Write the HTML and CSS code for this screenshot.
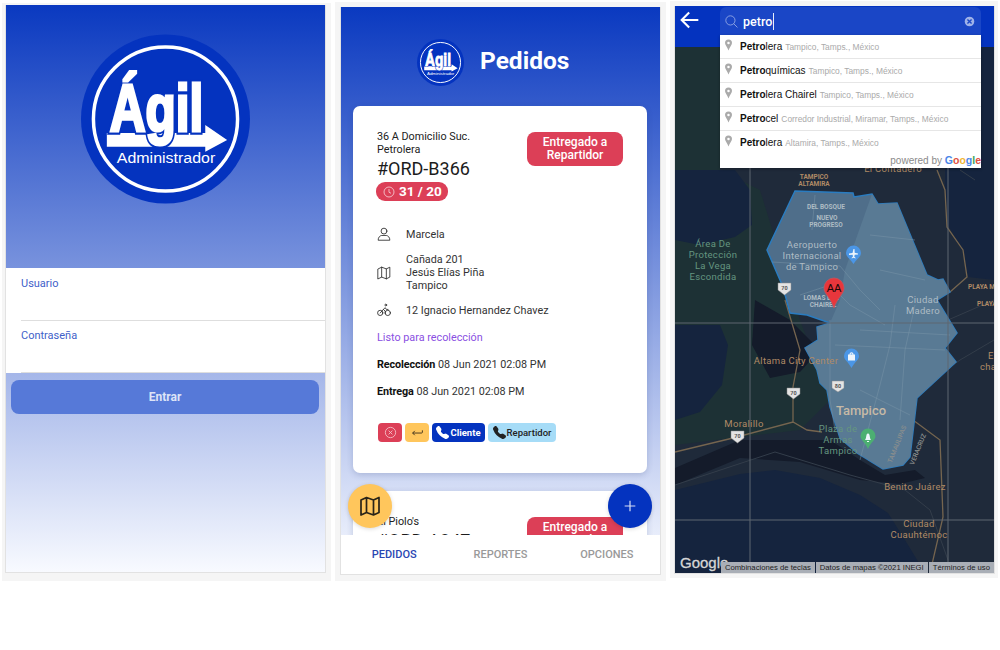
FILE: index.html
```html
<!DOCTYPE html>
<html lang="es">
<head>
    <meta charset="UTF-8">
    <meta name="viewport" content="width=device-width, initial-scale=1.0">
    <title>Ágil Administrador</title>
    <link rel="stylesheet" href="styles.css">
</head>
<body>
    <svg class="defs" width="0" height="0" aria-hidden="true">
        <symbol id="logo" viewBox="0 0 170 170">
            <circle cx="85" cy="85" r="85" fill="#0433bf"/>
            <circle cx="85" cy="85" r="72.5" fill="none" stroke="#fff" stroke-width="3.5"/>
            <path d="M26 99H125V91L147 106 125 118V113H26Z" fill="#fff"/>
            <text class="logo-word logo-word-edge" x="29" y="97" textLength="94" lengthAdjust="spacingAndGlyphs">Ágil</text>
            <text class="logo-word" x="29" y="97" textLength="94" lengthAdjust="spacingAndGlyphs">Ágil</text>
            <text class="logo-sub" x="36" y="129" textLength="99" lengthAdjust="spacingAndGlyphs">Administrador</text>
        </symbol>
    </svg>

    <div class="screens">
        <!-- login -->
        <div class="frame frame-login">
            <div class="phone phone-gradient">
                <div class="login-top">
                    <svg class="logo-big"><use href="#logo"/></svg>
                </div>
                <div class="login-form">
                    <div class="field">
                        <label for="usuario">Usuario</label>
                        <input type="text" id="usuario">
                    </div>
                    <div class="field">
                        <label for="password">Contraseña</label>
                        <input type="password" id="password">
                    </div>
                </div>
                <div class="login-action">
                    <button class="enter-button">Entrar</button>
                </div>
            </div>
        </div>

        <!-- pedidos -->
        <div class="frame frame-orders">
            <div class="phone phone-gradient">
                <div class="orders-scroll">
                    <div class="orders-head">
                        <svg class="logo-small"><use href="#logo"/></svg>
                        <h1>Pedidos</h1>
                    </div>
                    <div class="order-card">
                        <div class="order-top">
                            <div class="order-id">
                                <div class="branch">36 A Domicilio Suc. Petrolera</div>
                                <div class="order-number">#ORD-B366</div>
                                <div class="time-badge">
                                    <svg viewBox="0 0 24 24" class="clock-icon"><circle cx="12" cy="12" r="10"/><path d="M12 6v6.5l4 2"/></svg>
                                    31 / 20
                                </div>
                            </div>
                            <div class="status-button">Entregado a Repartidor</div>
                        </div>
                        <div class="info-row info-first">
                            <svg viewBox="0 0 24 24" class="line-icon"><circle cx="12" cy="7" r="5"/><path d="M2 22c0-4.500 3-7 6-7.500h8c3 .5 6 3 6 7.500z"/></svg>
                            <span>Marcela</span>
                        </div>
                        <div class="info-row">
                            <svg viewBox="0 0 24 24" class="line-icon"><path d="M2 5l6-3 8 3 6-3v17l-6 3-8-3-6 3zM8 2v17M16 5v17"/></svg>
                            <span>Cañada 201<br>Jesús Elías Piña<br>Tampico</span>
                        </div>
                        <div class="info-row info-last">
                            <svg viewBox="0 0 24 24" class="line-icon"><circle cx="5.500" cy="17" r="4.500"/><circle cx="18.500" cy="17" r="4.500"/><circle cx="15" cy="3.500" r="1.500"/><path d="M5.500 17l5.500-6 3-3 2 3h3M11 11l3 3v4"/></svg>
                            <span>12 Ignacio Hernandez Chavez</span>
                        </div>
                        <div class="ready-text">Listo para recolección</div>
                        <div class="date-text"><b>Recolección</b> 08 Jun 2021 02:08 PM</div>
                        <div class="date-text"><b>Entrega</b> 08 Jun 2021 02:08 PM</div>
                        <div class="order-actions">
                            <div class="mini-button mini-red">
                                <svg viewBox="0 0 24 24" class="mini-icon"><circle cx="12" cy="12" r="9.500"/><path d="M8.500 8.500l7 7M15.500 8.500l-7 7"/></svg>
                            </div>
                            <div class="mini-button mini-yellow">
                                <svg viewBox="0 0 24 24" class="mini-icon"><path d="M21 8v3.500a1.500 1.500 0 0 1-1.500 1.500H3M7 9l-4 4 4 4"/></svg>
                            </div>
                            <div class="mini-button mini-blue">
                                <svg viewBox="0 0 16 16" class="phone-icon"><path d="M1.885.511a1.745 1.745 0 0 1 2.61.163L6.29 2.98c.329.423.445.974.315 1.494l-.547 2.19a.678.678 0 0 0 .178.643l2.457 2.457a.678.678 0 0 0 .644.178l2.189-.547a1.745 1.745 0 0 1 1.494.315l2.306 1.794c.829.645.905 1.870.163 2.611l-1.034 1.034c-.74.740-1.846 1.065-2.877.702a18.634 18.634 0 0 1-7.010-4.420 18.634 18.634 0 0 1-4.420-7.009c-.362-1.030-.037-2.137.703-2.877L1.885.511z"/></svg>
                                Cliente
                            </div>
                            <div class="mini-button mini-sky">
                                <svg viewBox="0 0 16 16" class="phone-icon"><path d="M1.885.511a1.745 1.745 0 0 1 2.61.163L6.29 2.98c.329.423.445.974.315 1.494l-.547 2.19a.678.678 0 0 0 .178.643l2.457 2.457a.678.678 0 0 0 .644.178l2.189-.547a1.745 1.745 0 0 1 1.494.315l2.306 1.794c.829.645.905 1.870.163 2.611l-1.034 1.034c-.74.740-1.846 1.065-2.877.702a18.634 18.634 0 0 1-7.010-4.420 18.634 18.634 0 0 1-4.420-7.009c-.362-1.030-.037-2.137.703-2.877L1.885.511z"/></svg>
                                Repartidor
                            </div>
                        </div>
                    </div>
                    <div class="order-card">
                        <div class="order-top">
                            <div class="order-id">
                                <div class="branch">El Piolo's</div>
                                <div class="order-number">#ORD-A347</div>
                            </div>
                            <div class="status-button">Entregado a Repartidor</div>
                        </div>
                    </div>
                    <div class="fab fab-map">
                        <svg viewBox="0 0 24 24" class="fab-map-icon"><path d="M3 6l5.500-2.500 7 2.500L21 3.500v15L15.500 21l-7-2.500L3 21zM8.500 3.500v15M15.500 6v15"/></svg>
                    </div>
                    <div class="fab fab-add">
                        <svg viewBox="0 0 24 24" class="fab-add-icon"><path d="M12 4v16M4 12h16"/></svg>
                    </div>
                </div>
                <div class="bottom-nav">
                    <div class="nav-item nav-active">PEDIDOS</div>
                    <div class="nav-item">REPORTES</div>
                    <div class="nav-item">OPCIONES</div>
                </div>
            </div>
        </div>

        <!-- mapa -->
        <div class="frame frame-map">
            <div class="phone phone-map">
                <div class="map-bar">
                    <svg viewBox="0 0 24 24" class="back-icon"><path d="M22 12H3M11 3l-9 9 9 9"/></svg>
                    <div class="search-box">
                        <svg viewBox="0 0 24 24" class="search-icon"><circle cx="10" cy="10" r="8.500"/><path d="M16 16l7 7"/></svg>
                        <span class="search-text">petro</span>
                        <span class="search-caret"></span>
                        <svg viewBox="0 0 24 24" class="clear-icon"><circle cx="12" cy="12" r="12"/><path d="M7.500 7.500l9 9M16.500 7.500l-9 9"/></svg>
                    </div>
                </div>

                <svg class="map-canvas" viewBox="675 47 319 526">
                    <rect class="m-land" x="675" y="47" width="319" height="526"/>
                    <path class="m-green" d="M675 47H720V170L760 190 800 320 830 400 800 430 675 445Z"/>
                    <path class="m-water" d="M675 170H735L750 190 752 225 735 237 700 245 675 240Z"/>
                    <path class="m-water" d="M675 325H720L728 345 722 385 700 412 675 420Z"/>
                    <path class="m-dark" d="M755 300L790 320 820 350 800 372 770 378 752 345Z"/>
                    <path class="m-water" d="M945 47H994V280L968 277 962 250 948 225 945 190Z"/>
                    <path class="m-dark" d="M675 468L740 440 830 440 860 460 885 475 915 470 925 478 900 484 860 480 800 462 740 458 675 485Z"/>
                    <path class="m-water" d="M675 490L740 474 775 470 820 478 860 495 888 513 905 540 925 573H675Z"/>

                    <path class="m-road-thin" d="M675 485L775 452 850 475 905 490 930 510 948 560M960 170L975 180M905 400L960 360 994 340M948 320L994 300"/>
                    <path class="m-road" d="M675 452L733 438 793 422 807 430 822 432M793 422V387L800 350 785 300M890 408L913 420 940 440 943 517 930 573"/>
                    <path class="m-road" d="M937 170L945 190 947 227 963 250 967 277 950 292"/>

                    <path class="m-zone-left" d="M795 191L853 193 854 197 872 194 878 204 897 203 927 275 938 280 943 279 950 292 937 300 957 333 945 348 956 362 917 398 910 457 903 465 883 469 857 453 840 438 830 407 827 390 820 383 817 370 805 348 818 340 817 327 830 323 807 315 790 313 783 287 767 250Z"/>
                    <path class="m-zone-right" d="M872 194L878 204 897 203 927 275 938 280 943 279 950 292 937 300 957 333 945 348 956 362 917 398 910 457 903 465 883 469 857 453 840 438 830 407 827 390 820 383 817 370 805 348 818 340 817 327 830 323 840 300 845 270Z"/>
                    <path class="m-zone-road" d="M815 195L812 230M772 262L840 266 860 290 880 310M830 320V400L835 430M800 295L830 285 850 305 885 325M895 305L890 345 880 385 860 460M915 305L905 350 900 420M835 345L945 350M860 390L910 415M870 235L915 240M880 270L925 280M860 330L950 335"/>

                    <path class="m-grid" d="M750 47V573M948 47V573M675 323H994M675 520H994"/>

                    <text class="m-small m-tan" x="814" y="179">TAMPICO</text>
                    <text class="m-small m-tan" x="814" y="186">ALTAMIRA</text>
                    <text class="m-label m-tan" x="893" y="172">El Contadero</text>
                    <text class="m-small m-pale" x="826" y="209">DEL BOSQUE</text>
                    <text class="m-small m-pale" x="827" y="220">NUEVO</text>
                    <text class="m-small m-pale" x="826" y="227">PROGRESO</text>
                    <text class="m-label m-pale" x="812" y="248">Aeropuerto</text>
                    <text class="m-label m-pale" x="812" y="259">Internacional</text>
                    <text class="m-label m-pale" x="812" y="270">de Tampico</text>
                    <text class="m-label m-park" x="713" y="247">Área De</text>
                    <text class="m-label m-park" x="713" y="258">Protección</text>
                    <text class="m-label m-park" x="713" y="269">La Vega</text>
                    <text class="m-label m-park" x="713" y="280">Escondida</text>
                    <text class="m-small m-pale" x="821" y="300">LOMAS DEL</text>
                    <text class="m-small m-pale" x="823" y="307">CHAIREL</text>
                    <text class="m-label m-pale" x="923" y="303">Ciudad</text>
                    <text class="m-label m-pale" x="923" y="314">Madero</text>
                    <text class="m-small m-tan m-start" x="968" y="289">PLAYA MIRAMAR</text>
                    <text class="m-small m-tan m-start" x="977" y="306">PLAYA</text>
                    <text class="m-label m-tan" x="796" y="364">Altama City Center</text>
                    <text class="m-label m-tan m-start" x="988" y="359">El</text>
                    <text class="m-label m-tan m-start" x="980" y="370">chairel</text>
                    <text class="m-big" x="861" y="415">Tampico</text>
                    <text class="m-label m-park" x="838" y="432">Plaza de</text>
                    <text class="m-label m-park" x="838" y="443">Armas</text>
                    <text class="m-label m-park" x="838" y="454">Tampico</text>
                    <text class="m-label m-tan" x="744" y="427">Moralillo</text>
                    <text class="m-label m-tan" x="915" y="490">Benito Juárez</text>
                    <text class="m-label m-tan" x="919" y="527">Ciudad</text>
                    <text class="m-label m-tan" x="919" y="538">Cuauhtémoc</text>
                    <text class="m-road-name" transform="translate(899 445) rotate(-68)">TAMAULIPAS</text>
                    <text class="m-road-name" transform="translate(920 450) rotate(-68)">VERACRUZ</text>

                    <g class="m-shields">
                        <path d="M778 283H791V290L784.500 295 778 290Z"/>
                        <path d="M787 388H800V394L793.500 399 787 394Z"/>
                        <path d="M832 381H844V388L838 392 832 388Z"/>
                        <path d="M731 431H744V438L737.500 443 731 438Z"/>
                    </g>
                    <text class="m-shield-no" x="784.500" y="290">70</text>
                    <text class="m-shield-no" x="793.500" y="395">70</text>
                    <text class="m-shield-no" x="838" y="388">80</text>
                    <text class="m-shield-no" x="737.500" y="438">70</text>

                    <!-- pins -->
                    <path class="m-pin-air" d="M846 253a7.500 7.500 0 1 1 15 0c0 4-4.500 6-7.500 11-3-5-7.500-7-7.500-11z"/>
                    <path class="m-pin-glyph" d="M849 253.500l3.500-.5 1-4h1l.2 3.800 3.300.6v1l-3.300.4-.4 2 1.200 1v.6l-2-.6-1.800.6v-.6l1.200-1-.2-2-3.700.2z"/>
                    <path class="m-pin-air" d="M844 356a7.500 7.500 0 1 1 15 0c0 4-4.500 6-7.500 12-3-6-7.500-8-7.500-12z"/>
                    <path class="m-pin-glyph" d="M848 354.500h7v6h-7zM849.500 354.500c0-3 4-3 4 0h-1c0-1.500-2-1.500-2 0z"/>
                    <path class="m-pin-park" d="M860.500 436a7.500 7.500 0 1 1 15 0c0 4-4.500 6-7.500 13-3-7-7.500-9-7.500-13z"/>
                    <path class="m-pin-glyph" d="M865 440c1-1 1-3 1.500-5 .5-2 2.500-2 3 0 .5 2 .5 4 1.500 5zM867 441h2v1h-2z"/>
                    <path class="m-pin-red" d="M824 288a10 10 0 1 1 20 0c0 6-7 10-10 20-3-10-10-14-10-20z"/>
                    <text class="m-pin-text" x="834" y="292">AA</text>
                </svg>

                <div class="suggestions">
                    <div class="suggestion"><svg viewBox="0 0 10 16" class="sug-pin"><path d="M5 0a5 5 0 0 1 5 5c0 3-3.500 6-5 11C3.500 11 0 8 0 5a5 5 0 0 1 5-5zm0 3.200a1.800 1.800 0 1 0 0 3.600 1.800 1.800 0 0 0 0-3.600z"/></svg><span class="sug-main"><b>Petro</b>lera</span> <span class="sug-sub">Tampico, Tamps., México</span></div>
                    <div class="suggestion"><svg viewBox="0 0 10 16" class="sug-pin"><path d="M5 0a5 5 0 0 1 5 5c0 3-3.500 6-5 11C3.500 11 0 8 0 5a5 5 0 0 1 5-5zm0 3.200a1.800 1.800 0 1 0 0 3.600 1.800 1.800 0 0 0 0-3.600z"/></svg><span class="sug-main"><b>Petro</b>químicas</span> <span class="sug-sub">Tampico, Tamps., México</span></div>
                    <div class="suggestion"><svg viewBox="0 0 10 16" class="sug-pin"><path d="M5 0a5 5 0 0 1 5 5c0 3-3.500 6-5 11C3.500 11 0 8 0 5a5 5 0 0 1 5-5zm0 3.200a1.800 1.800 0 1 0 0 3.600 1.800 1.800 0 0 0 0-3.600z"/></svg><span class="sug-main"><b>Petro</b>lera Chairel</span> <span class="sug-sub">Tampico, Tamps., México</span></div>
                    <div class="suggestion"><svg viewBox="0 0 10 16" class="sug-pin"><path d="M5 0a5 5 0 0 1 5 5c0 3-3.500 6-5 11C3.500 11 0 8 0 5a5 5 0 0 1 5-5zm0 3.200a1.800 1.800 0 1 0 0 3.600 1.800 1.800 0 0 0 0-3.600z"/></svg><span class="sug-main"><b>Petro</b>cel</span> <span class="sug-sub">Corredor Industrial, Miramar, Tamps., México</span></div>
                    <div class="suggestion"><svg viewBox="0 0 10 16" class="sug-pin"><path d="M5 0a5 5 0 0 1 5 5c0 3-3.500 6-5 11C3.500 11 0 8 0 5a5 5 0 0 1 5-5zm0 3.200a1.800 1.800 0 1 0 0 3.600 1.800 1.800 0 0 0 0-3.600z"/></svg><span class="sug-main"><b>Petro</b>lera</span> <span class="sug-sub">Altamira, Tamps., México</span></div>
                    <div class="powered">powered by <b class="g-word"><span class="g-blue">G</span><span class="g-red">o</span><span class="g-yellow">o</span><span class="g-blue">g</span><span class="g-green">l</span><span class="g-red">e</span></b></div>
                </div>

                <div class="map-google">Google</div>
                <div class="map-credits">
                    <span class="credit">Combinaciones de teclas</span>
                    <span class="credit">Datos de mapas ©2021 INEGI</span>
                    <span class="credit">Términos de uso</span>
                </div>
            </div>
        </div>
    </div>
</body>
</html>
```

FILE: styles.css
```css
body {
    margin: 0;
    background: #fff;
    font-family: 'Roboto', 'Liberation Sans', sans-serif;
    color: #222;
}
.defs {
    position: absolute;
}
.screens {
    display: flex;
    align-items: flex-start;
    gap: 4px;
    padding-left: 2px;
}
.frame {
    box-sizing: border-box;
    background: #f5f5f5;
    display: flex;
}
.frame-login {
    width: 329px;
    height: 578px;
    margin-top: 3px;
    padding: 2px 0 0 3px;
}
.frame-orders {
    width: 331px;
    height: 579px;
    margin-top: 2px;
    padding: 5px 0 0 5px;
}
.frame-map {
    width: 328px;
    height: 577px;
    margin-top: 1px;
    padding: 5px 0 0 4px;
}
.phone {
    box-sizing: border-box;
    width: 321px;
    height: 568px;
    border: 1px solid #e2e2e2;
    border-top: none;
    display: flex;
    flex-direction: column;
    position: relative;
    overflow: hidden;
}
.phone-gradient {
    background: linear-gradient(#0a39c0, #f8faff);
}

/* logo */
.logo-word {
    font-family: 'Liberation Sans', sans-serif;
    font-weight: bold;
    font-size: 67px;
    fill: #fff;
    stroke: #fff;
    stroke-width: 3.2px;
}
.logo-word-edge {
    stroke: #0433bf;
    stroke-width: 7.5px;
}
.logo-sub {
    font-family: 'Liberation Sans', sans-serif;
    font-size: 15.5px;
    fill: #fff;
}

/* login */
.login-top {
    height: 263px;
    display: flex;
    justify-content: center;
    padding-top: 29px;
    box-sizing: border-box;
}
.logo-big {
    width: 169px;
    height: 170px;
}
.login-form {
    background: #fff;
}
.field {
    box-sizing: border-box;
    height: 52.5px;
    margin-left: 15px;
    padding-top: 8.5px;
    border-bottom: 1px solid #dedede;
}
.field label {
    display: block;
    font-size: 11px;
    line-height: 13px;
    color: #3f5fc9;
}
.field input {
    display: block;
    width: 100%;
    height: 26px;
    border: none;
    outline: none;
    background: transparent;
}
.login-action {
    padding: 7px 6px 0 5px;
}
.enter-button {
    display: block;
    width: 100%;
    height: 34px;
    border: none;
    border-radius: 8px;
    background: #5679d8;
    color: #dde4f7;
    font-family: inherit;
    font-size: 12px;
    font-weight: 700;
}

/* pedidos */
.orders-scroll {
    flex: 1;
    min-height: 0;
    overflow: hidden;
    position: relative;
}
.orders-head {
    height: 99px;
    box-sizing: border-box;
    padding: 32px 0 0 76px;
    display: flex;
    align-items: flex-start;
    gap: 16px;
}
.logo-small {
    width: 47px;
    height: 47px;
}
.orders-head h1 {
    margin: 0;
    font-size: 24.5px;
    line-height: 44px;
    font-weight: 700;
    color: #fff;
}
.order-card {
    margin: 0 13px 18px 12px;
    padding: 24px 24px 31px;
    background: #fff;
    border-radius: 7px;
    box-shadow: 0 2px 6px rgba(30, 50, 110, 0.2);
    font-size: 10.8px;
    line-height: 13px;
}
.order-top {
    display: flex;
    justify-content: space-between;
    align-items: flex-start;
}
.order-id {
    width: 120px;
}
.order-number {
    margin-top: 1px;
    font-size: 18px;
    line-height: 24px;
    color: #1c1c1c;
    white-space: nowrap;
}
.time-badge {
    display: inline-flex;
    align-items: center;
    gap: 4px;
    height: 19px;
    margin: 1px 0 0 -1px;
    padding: 0 6px 0 7px;
    border-radius: 9px;
    background: #dc3f57;
    color: #fff;
    font-size: 13.500px;
    font-weight: 700;
    white-space: nowrap;
}
.clock-icon {
    width: 12px;
    height: 12px;
    fill: none;
    stroke: #f7d6da;
    stroke-width: 1.600;
}
.status-button {
    box-sizing: border-box;
    width: 96px;
    height: 34px;
    margin-top: 2px;
    padding-top: 4px;
    border-radius: 8px;
    background: #dc3f57;
    color: #fff;
    font-size: 12px;
    font-weight: 500;
    text-align: center;
}
.info-row {
    display: flex;
    align-items: center;
    margin-top: 12px;
    color: #333;
}
.info-first {
    margin-top: 26px;
}
.info-last {
    margin-top: 11px;
}
.line-icon {
    width: 14px;
    height: 14px;
    margin-right: 15px;
    flex: none;
    fill: none;
    stroke: #222;
    stroke-width: 1.400;
    stroke-linejoin: round;
    stroke-linecap: round;
}
.ready-text {
    margin-top: 14px;
    color: #8a50e2;
}
.date-text {
    margin-top: 14px;
    color: #333;
}
.date-text b {
    color: #111;
    font-weight: 700;
    letter-spacing: -0.1px;
}
.order-actions {
    display: flex;
    gap: 3px;
    margin: 25px 0 0 1px;
}
.mini-button {
    height: 19px;
    border-radius: 4px;
    display: flex;
    align-items: center;
    justify-content: center;
    font-size: 9.5px;
    font-weight: 500;
}
.mini-red {
    width: 24px;
    background: #dc3f57;
}
.mini-yellow {
    width: 24px;
    background: #ffc65c;
}
.mini-blue {
    width: 53px;
    background: #0433bf;
    color: #fff;
    font-weight: 700;
}
.mini-sky {
    width: 68px;
    background: #a6dcf7;
    color: #222;
}
.mini-icon {
    width: 13px;
    height: 13px;
    fill: none;
    stroke-width: 1.600;
}
.mini-red .mini-icon {
    stroke: #f4c3cb;
}
.mini-yellow .mini-icon {
    stroke: #33291a;
}
.phone-icon {
    width: 13px;
    height: 13px;
    margin-right: 1px;
    fill: currentColor;
}
.fab {
    position: absolute;
    width: 44px;
    height: 44px;
    top: 477px;
    border-radius: 50%;
    display: flex;
    align-items: center;
    justify-content: center;
    box-shadow: 0 1px 4px rgba(0, 0, 0, 0.15);
}
.fab-map {
    left: 7px;
    background: #ffc65c;
}
.fab-add {
    left: 267px;
    background: #0433bf;
}
.fab-map-icon {
    width: 24px;
    height: 24px;
    fill: none;
    stroke: #2a2418;
    stroke-width: 1.700;
    stroke-linejoin: round;
}
.fab-add-icon {
    width: 16px;
    height: 16px;
    fill: none;
    stroke: #d6def5;
    stroke-width: 1.800;
}
.bottom-nav {
    height: 39px;
    flex: none;
    background: #fff;
    display: flex;
}
.nav-item {
    flex: 1;
    text-align: center;
    font-size: 11px;
    font-weight: 500;
    line-height: 39px;
    color: #999;
}
.nav-active {
    color: #2a46b2;
}

/* mapa */
.phone-map {
    background: #1f2a3a;
}
.map-bar {
    height: 41px;
    flex: none;
    background: #0433bf;
    position: relative;
    z-index: 2;
}
.back-icon {
    position: absolute;
    left: 5px;
    top: 4px;
    width: 20px;
    height: 20px;
    fill: none;
    stroke: #fff;
    stroke-width: 2.500;
}
.search-box {
    position: absolute;
    left: 45px;
    top: 1px;
    width: 261px;
    height: 28px;
    box-sizing: border-box;
    padding: 0 6px 0 5px;
    border-radius: 6px 6px 0 0;
    background: #1a46c6;
    display: flex;
    align-items: center;
}
.search-icon {
    width: 13px;
    height: 13px;
    margin-right: 5px;
    fill: none;
    stroke: #9fb2e8;
    stroke-width: 1.500;
}
.search-text {
    color: #fff;
    font-size: 12.5px;
    font-weight: 500;
}
.search-caret {
    width: 1px;
    height: 17px;
    margin-left: 1px;
    background: #e8edfa;
}
.clear-icon {
    width: 11px;
    height: 11px;
    margin-left: auto;
    margin-right: 0;
    fill: #9fb2e8;
    stroke: #1a46c6;
    stroke-width: 3;
}
.map-canvas {
    display: block;
    width: 319px;
    height: 526px;
    flex: none;
}
.m-land { fill: #1f2a3a; }
.m-green { fill: #1d3135; }
.m-water { fill: #15243e; }
.m-dark { fill: #141b2a; }
.m-road-thin { fill: none; stroke: #333d4a; stroke-width: 1; }
.m-road { fill: none; stroke: #75654f; stroke-width: 1.300; }
.m-zone-left { fill: #4f6e8a; stroke: #2a7cc0; stroke-width: 1.500; }
.m-zone-right { fill: #597a94; }
.m-zone-road { fill: none; stroke: #7b95a8; stroke-width: .8; opacity: .6; }
.m-grid { fill: none; stroke: #5f6771; stroke-width: 1; }
.m-label, .m-small, .m-big, .m-road-name {
    font-family: 'Roboto', sans-serif;
    text-anchor: middle;
}
.m-label { font-size: 9.5px; letter-spacing: .3px; }
.m-small { font-size: 6.500px; font-weight: 700; }
.m-start { text-anchor: start; }
.m-big { font-size: 13px; font-weight: 500; fill: #c6b9a6; }
.m-road-name { font-size: 6.500px; font-weight: 500; fill: #8b8f8e; }
.m-tan { fill: #b08a66; }
.m-pale { fill: #aebcc4; }
.m-park { fill: #659680; }
.m-shields { fill: #e4e4e4; stroke: #8d8d8d; stroke-width: .5; }
.m-shield-no {
    font-family: 'Roboto', sans-serif;
    font-size: 5.500px;
    font-weight: 700;
    text-anchor: middle;
    fill: #555;
}
.m-pin-air { fill: #4b96e6; }
.m-pin-park { fill: #4caf72; }
.m-pin-glyph { fill: #eef5fc; }
.m-pin-red { fill: #e8363c; stroke: #c8555c; stroke-width: .7; }
.m-pin-text {
    font-family: 'Liberation Sans', sans-serif;
    font-size: 11px;
    text-anchor: middle;
    fill: #1c0808;
}
.suggestions {
    position: absolute;
    left: 45px;
    top: 29px;
    z-index: 3;
    width: 261px;
    height: 133px;
    background: #fff;
    box-shadow: 0 1px 3px rgba(0, 0, 0, 0.3);
    font-family: 'Liberation Sans', sans-serif;
}
.suggestion {
    box-sizing: border-box;
    height: 24px;
    padding-left: 5px;
    border-bottom: 1px solid #e6e6e6;
    display: flex;
    align-items: center;
    gap: 3px;
    white-space: nowrap;
}
.suggestion:nth-child(5) {
    border-bottom: none;
    height: 23px;
}
.sug-pin {
    width: 7px;
    height: 12px;
    margin: -3px 5px 0 0;
    fill: #aaa;
}
.sug-main {
    font-size: 10px;
    color: #111;
}
.sug-sub {
    font-size: 8.400px;
    color: #aaa;
}
.powered {
    text-align: right;
    font-size: 10px;
    line-height: 13px;
    color: #8a8a8a;
}
.g-word { font-size: 10.500px; }
.g-blue { color: #4a85e8; }
.g-red { color: #e0503f; }
.g-yellow { color: #f2b632; }
.g-green { color: #3fa35a; }
.map-google {
    position: absolute;
    left: 5px;
    bottom: 2px;
    z-index: 2;
    font-family: 'Liberation Sans', sans-serif;
    font-size: 15px;
    -webkit-text-stroke: 0.3px #d6d6d6;
    color: #d6d6d6;
}
.map-credits {
    position: absolute;
    right: 0;
    bottom: 0;
    z-index: 2;
    height: 11px;
    display: flex;
    gap: 1px;
}
.credit {
    padding: 0 4px;
    background: #a9aeb6;
    color: #222;
    font-family: 'Liberation Sans', sans-serif;
    font-size: 7.700px;
    line-height: 11px;
    white-space: nowrap;
}
```
